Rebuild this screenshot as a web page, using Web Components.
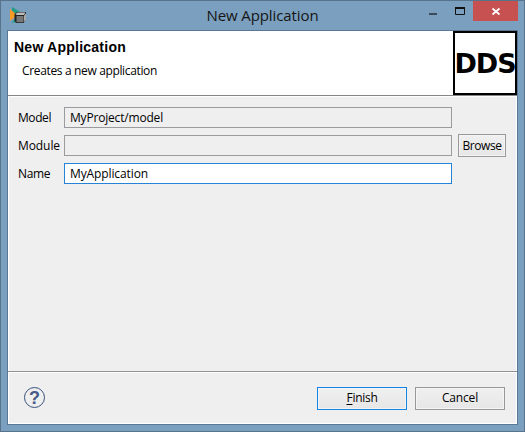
<!DOCTYPE html>
<html lang="en">
<head>
<meta charset="utf-8">
<title>New Application</title>
<style>
html,body{margin:0;width:525px;height:432px;overflow:hidden}
body{font:12px/16px "Open Sans","Noto Sans",sans-serif;color:#000}
</style>
</head>
<body>
<app-window></app-window>
<script>
const define = (name, markup, setup) => {
  const template = document.createElement('template');
  template.innerHTML = markup;
  customElements.define(name, class extends HTMLElement {
    constructor() {
      super();
      this.attachShadow({mode: 'open'}).append(template.content.cloneNode(true));
    }
    connectedCallback() { if (setup) setup(this); }
  });
};

// Text whose tracking is adjusted so that it is as wide as its "width" attribute.
define('ui-text', `<style>:host{display:inline-block;white-space:nowrap}span{display:inline-block}</style><span><slot></slot></span>`, el => {
  const span = el.shadowRoot.querySelector('span');
  const goal = Number(el.getAttribute('width'));
  el.style.width = goal + 'px';
  const natural = span.getBoundingClientRect().width;
  span.style.letterSpacing = (goal - natural) / Math.max(1, el.textContent.length) + 'px';
});

define('app-icon', `<style>:host{display:block;width:17px;height:17px}svg{display:block}</style>
<svg width="17" height="17" viewBox="0 0 17 17">
<path d="M2 0L12 6L7 10L2 5Z" fill="#229b87"/><path d="M0 2L7 8L0 14Z" fill="#f79a25"/><path d="M1.500 15.500L6 11V15.500Z" fill="#229b87"/>
<path d="M4.500 7L7 5H16V12.500L13.500 16H6L4.500 13.500Z" fill="#222"/>
<path d="M5.500 7L7.500 5.500H15.500L14 8H6.500Z" fill="#bdbdbd"/><path d="M6.500 9H13.500V15.300H6.500Z" fill="#777"/><path d="M14 8.500L16 6.500V12.500L14 15Z" fill="#aaa"/>
</svg>`);

define('window-controls', `<style>
:host{display:flex;height:20px;width:92px}
svg{display:block}
</style>
<svg width="47" height="20"><path d="M3 12h8v2H3z" fill="#3c4b57"/><path d="M29.500 6.500h9v7h-9z" fill="none" stroke="#111" /><path d="M29 6h10v2H29z" fill="#111"/></svg>
<svg width="45" height="20"><path fill="#c75050" d="M0 0h45v20H0z"/><path d="M19.500 7.500l7 6m0-6l-7 6" stroke="#fff" stroke-width="1.700" fill="none"/></svg>`);

define('title-bar', `<style>
:host{display:grid;grid-template-columns:1fr 112px 1fr;height:29px;font-size:15px;line-height:20px;color:#151515}
app-icon{margin:6px 0 0 9px}
ui-text{margin-top:4px}
window-controls{justify-self:end;margin-right:6px}
</style><app-icon></app-icon><ui-text width="112">New Application</ui-text><window-controls></window-controls>`);

define('dds-logo', `<style>
:host{display:flex;box-sizing:border-box;width:64px;height:64px;border:2px solid #000;align-items:center;justify-content:center;background:#fff;font:bold 27px/30px "DejaVu Sans",sans-serif}
ui-text{margin-top:2px;flex:none}
</style><ui-text width="61">DDS</ui-text>`);

define('wizard-header', `<style>
:host{display:flex;justify-content:space-between;height:64px;background:#fff;border-bottom:1px solid #868686;box-shadow:0 1px #fff}
.copy{display:flex;flex-direction:column;padding:8px 0 0 6px}
.title{font:bold 14px/17px "Liberation Sans",Arial,sans-serif}
.description{margin:7px 0 0 8px}
</style><div class="copy"><ui-text class="title" width="112">New Application</ui-text><ui-text class="description" width="135">Creates a new application</ui-text></div><dds-logo></dds-logo>`);

define('text-field', `<style>
:host{display:block;box-sizing:border-box;height:21px;border:1px solid #9a9a9f;padding:1px 5px;line-height:17px;background:#efefef}
:host([active]){background:#fff;border-color:#2583d8}
</style><slot></slot>`);

define('push-button', `<style>
:host{display:flex;box-sizing:border-box;height:23px;border:1px solid #999;align-items:center;justify-content:center;background:linear-gradient(#f0f0f0,#e6e6e6);box-shadow:inset 0 0 0 1px #f4f4f4}
:host([primary]){border-color:#1583e4}
</style><slot></slot>`);

define('wizard-form', `<style>
:host{display:grid;grid-template-columns:46px 388px 48px;grid-template-rows:21px 21px 21px;row-gap:7px;padding:11px 0 0 10px;align-items:center}
push-button{margin-left:6px;width:48px}
text-field{grid-column:2}
</style>
<ui-text width="33">Model</ui-text><text-field><ui-text width="93">MyProject/model</ui-text></text-field>
<ui-text width="42" style="grid-row:2">Module</ui-text><text-field></text-field><push-button><ui-text width="39">Browse</ui-text></push-button>
<ui-text width="32">Name</ui-text><text-field active><ui-text width="78">MyApplication</ui-text></text-field>`);

define('help-button', `<style>
:host{display:flex;box-sizing:border-box;width:21px;height:21px;border:1px solid #38507c;border-radius:50%;align-items:center;justify-content:center;color:#465b86;font:bold 18px/18px "Liberation Sans",sans-serif}
</style>?`);

define('wizard-footer', `<style>
:host{display:flex;height:52px;border-top:1px solid #919191;box-shadow:inset 0 1px #fff;align-items:center;padding-left:16px}
help-button{margin-bottom:1px}
push-button{width:90px}
.finish{margin-left:auto}.cancel{margin:0 12px 0 8px}
u{text-underline-offset:2px}
</style><help-button></help-button><push-button primary class="finish"><ui-text width="31"><u>F</u>inish</ui-text></push-button><push-button class="cancel"><ui-text width="36">Cancel</ui-text></push-button>`);

define('app-window', `<style>
:host{display:flex;flex-direction:column;box-sizing:border-box;width:525px;height:432px;border:1px solid #58738c;background:#7b9fbe}
main{display:flex;flex-direction:column;box-sizing:border-box;width:511px;height:395px;margin-left:6px;border:1px solid #587896;background:#efefef;box-shadow:inset 0 0 0 1px #fff}
wizard-form{flex:1;align-content:start}
</style><title-bar></title-bar><main><wizard-header></wizard-header><wizard-form></wizard-form><wizard-footer></wizard-footer></main>`);
</script>
</body>
</html>
